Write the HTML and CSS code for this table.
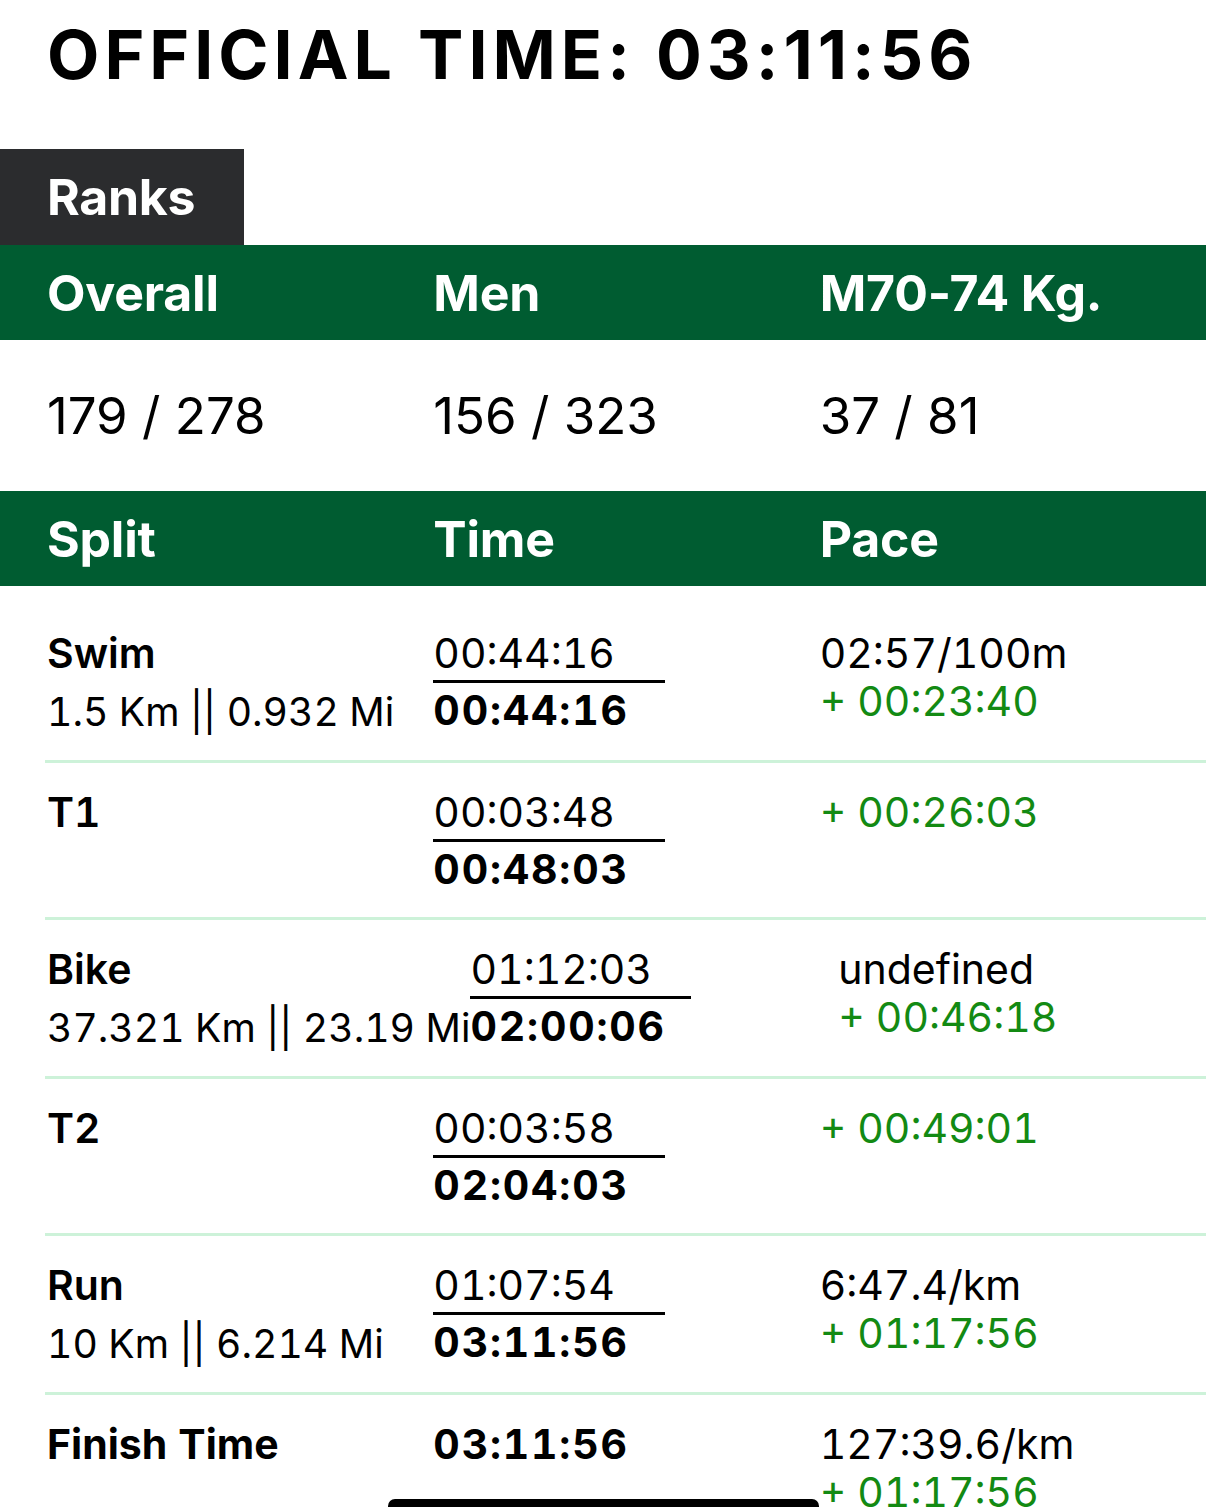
FILE: index.html
```html
<!DOCTYPE html>
<html>
<head>
<meta charset="utf-8">
<link rel="stylesheet" href="styles.css">
</head>
<body>
<div class="page">
  <h1 class="official">OFFICIAL TIME: 03:11:56</h1>
  <div class="tab">Ranks</div>
  <div class="bar">
    <div class="col">Overall</div>
    <div class="col">Men</div>
    <div class="col">M70-74 Kg.</div>
  </div>
  <div class="ranks">
    <div class="col">179 / 278</div>
    <div class="col">156 / 323</div>
    <div class="col">37 / 81</div>
  </div>
  <div class="bar">
    <div class="col">Split</div>
    <div class="col">Time</div>
    <div class="col">Pace</div>
  </div>
  <div class="splits">
    <div class="row">
      <div class="col name"><div class="l1 strong">Swim</div><div class="l2">1.5 Km || 0.932 Mi</div></div>
      <div class="col time"><div class="seg">00:44:16</div><div class="cum">00:44:16</div></div>
      <div class="col pace"><div class="l1">02:57/100m</div><div class="diff">+ 00:23:40</div></div>
    </div>
    <div class="row">
      <div class="col name"><div class="l1 strong">T1</div></div>
      <div class="col time"><div class="seg">00:03:48</div><div class="cum">00:48:03</div></div>
      <div class="col pace"><div class="diff first">+ 00:26:03</div></div>
    </div>
    <div class="row">
      <div class="col name"><div class="l1 strong">Bike</div><div class="l2">37.321 Km || 23.19 Mi</div></div>
      <div class="col time"><div class="seg">01:12:03</div><div class="cum">02:00:06</div></div>
      <div class="col pace"><div class="l1">undefined</div><div class="diff">+ 00:46:18</div></div>
    </div>
    <div class="row">
      <div class="col name"><div class="l1 strong">T2</div></div>
      <div class="col time"><div class="seg">00:03:58</div><div class="cum">02:04:03</div></div>
      <div class="col pace"><div class="diff first">+ 00:49:01</div></div>
    </div>
    <div class="row">
      <div class="col name"><div class="l1 strong">Run</div><div class="l2">10 Km || 6.214 Mi</div></div>
      <div class="col time"><div class="seg">01:07:54</div><div class="cum">03:11:56</div></div>
      <div class="col pace"><div class="l1">6:47.4/km</div><div class="diff">+ 01:17:56</div></div>
    </div>
    <div class="row">
      <div class="col name"><div class="l1 heavy">Finish Time</div></div>
      <div class="col time"><div class="cum only">03:11:56</div></div>
      <div class="col pace"><div class="l1">127:39.6/km</div><div class="diff">+ 01:17:56</div></div>
    </div>
  </div>
</div>
<div class="home-indicator"></div>
</body>
</html>
```
FILE: styles.css
```css
html, body {
  margin: 0;
  padding: 0;
  background: #ffffff;
  overflow: hidden;
  height: 1507px;
}
body {
  font-family: "Inter", "Liberation Sans", sans-serif;
  font-variant-numeric: tabular-nums;
  color: #000;
  position: relative;
}
.page {
  display: flex;
  flex-direction: column;
}
.official {
  margin: 0;
  padding: 17px 0 0 47px;
  height: 149px;
  box-sizing: border-box;
  font-size: 68px;
  line-height: 74px;
  font-weight: 700;
  letter-spacing: 5px;
  font-variant-numeric: normal;
}
.tab {
  width: 244px;
  height: 96px;
  box-sizing: border-box;
  background: #2b2c2e;
  color: #fff;
  font-size: 50px;
  font-weight: 700;
  line-height: 96px;
  padding-left: 47px;
  letter-spacing: -0.3px;
}
.bar {
  height: 95px;
  background: #005c31;
  color: #fff;
  display: flex;
  align-items: center;
  padding-left: 47px;
  font-size: 50px;
  font-weight: 700;
  letter-spacing: -0.2px;
  font-variant-numeric: normal;
}
.col {
  flex: 1 1 0;
  white-space: nowrap;
}
.ranks {
  height: 151px;
  display: flex;
  align-items: center;
  padding-left: 47px;
  font-size: 51px;
  font-weight: 400;
  font-variant-numeric: normal;
}
.splits {
  padding-top: 18px;
  margin-left: 45px;
}
.row {
  display: flex;
  align-items: flex-start;
  padding: 22px 0 21px 2px;
  font-size: 41px;
}
.row + .row {
  border-top: 3px solid #cdf2d9;
}
.l1 {
  line-height: 54px;
}
.strong {
  font-weight: 600;
}
.heavy {
  font-weight: 700;
}
.l2 {
  font-size: 39.2px;
  line-height: 54px;
  margin-top: 5px;
}
.time .seg {
  width: 60%;
  line-height: 54px;
  border-bottom: 3px solid #000;
}
.time .cum {
  line-height: 54px;
  font-weight: 700;
  letter-spacing: 1.8px;
}
.pace .diff {
  color: #138a13;
  line-height: 42px;
}
.pace .diff.first {
  line-height: 54px;
}
.home-indicator {
  position: absolute;
  left: 388px;
  top: 1499px;
  width: 431px;
  height: 14px;
  border-radius: 7px;
  background: #000;
}
```
